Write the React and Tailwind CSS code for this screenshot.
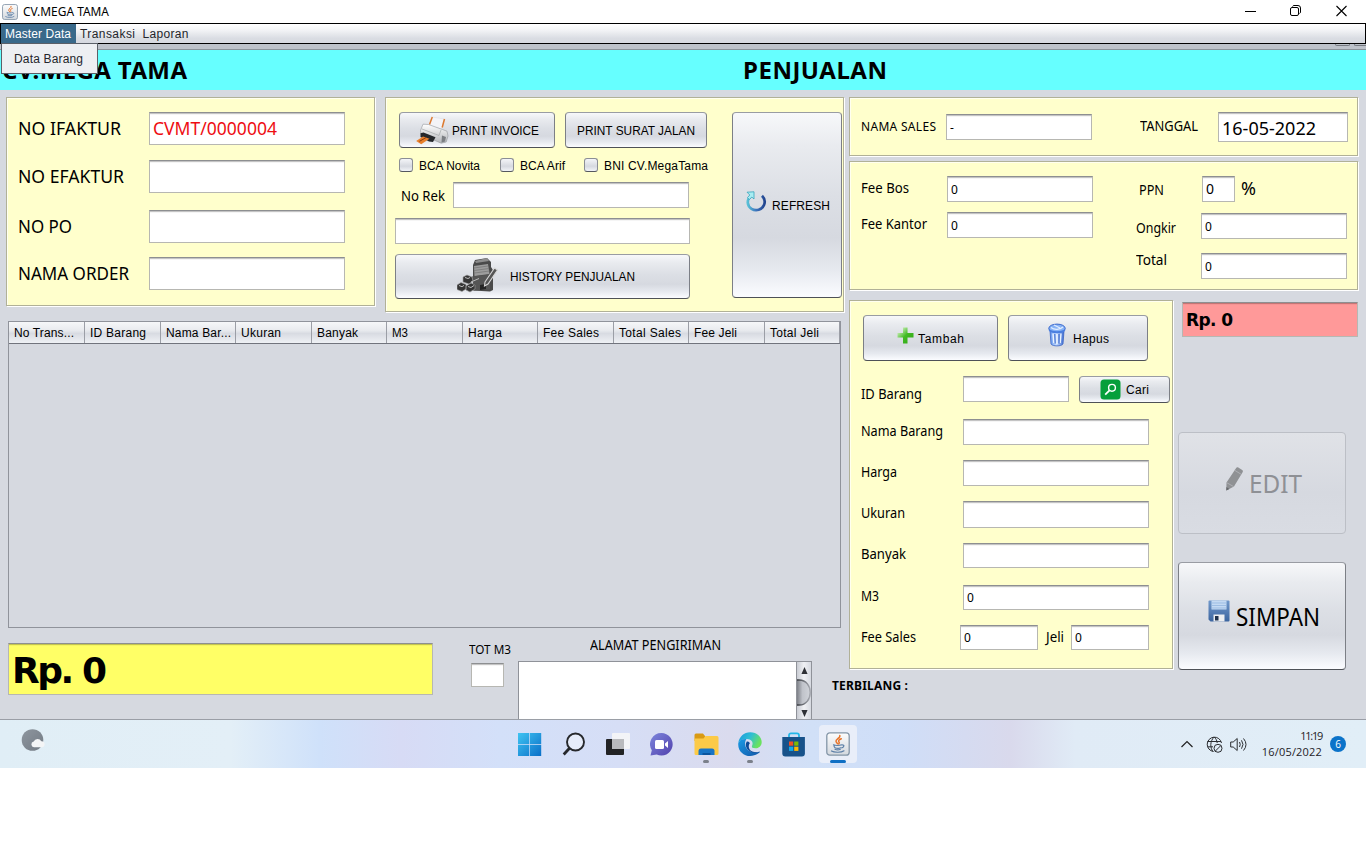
import React, { useLayoutEffect, useRef } from 'react';

const TAHOMA = "font-['Noto_Sans',sans-serif]";
const ARIAL = "font-['Liberation_Sans',sans-serif]";

/* Single line of text that fills `w` pixels: spaced out when short, condensed when long
   (or set tighter, with `tight`, so that the letters keep their width). */
function T({ w, tight, children, className = '', font = TAHOMA }) {
  const ref = useRef(null);
  useLayoutEffect(() => {
    const el = ref.current;
    if (!el || !w) return;
    el.style.letterSpacing = '0px';
    el.style.transform = 'none';
    const n = el.textContent.length;
    const natural = el.getBoundingClientRect().width;
    if (natural > w && !tight) {
      el.style.transform = `scaleX(${w / natural})`;
      el.style.marginRight = `${w - natural}px`;
    } else if (n > 1) {
      el.style.letterSpacing = `${(w - natural) / (n - 1)}px`;
    }
  }, [w, tight, children]);
  return (
    <span ref={ref} className={`block w-max flex-none origin-left whitespace-pre leading-[20px] text-black ${font} ${className}`}>
      {children}
    </span>
  );
}

function Panel({ className = '', children }) {
  return (
    <section
      className={`flex-none border border-[#b1b197] bg-[#ffffcc] shadow-[1px_1px_0_#fff,inset_1px_1px_0_#fffff0] ${className}`}
    >
      {children}
    </section>
  );
}

function Field({ className = '', children, bg = 'bg-white' }) {
  return (
    <div
      className={`flex flex-none items-center border border-[#b7b7b2] border-t-[#8d8f91] pl-[3px] shadow-[inset_0_1px_0_rgba(0,0,0,0.2),inset_0_2px_0_rgba(0,0,0,0.04)] ${bg} ${className}`}
    >
      {children}
    </div>
  );
}

function Zero() {
  return <T className="mt-[2px] text-[12px]">0</T>;
}

function Button({ className = '', children }) {
  return (
    <button
      className={`flex flex-none items-center rounded-[4px] border border-x-[#7c7f86] border-t-[#999ca3] border-b-[#4e5157] bg-[linear-gradient(#f7f8fa_0%,#e9ebef_18%,#dcdfe5_45%,#d6d9e0_68%,#e6e9ef_85%,#fbfcff_100%)] ${className}`}
    >
      {children}
    </button>
  );
}

function Check({ label, w, className }) {
  return (
    <div className={`flex items-center ${className}`}>
      <span className="mr-[6px] h-[14px] w-[14px] flex-none rounded-[3px] border border-[#8b8e95] border-b-[#55585f] bg-[linear-gradient(#f4f5f8,#d6d9e0_60%,#f2f4f8)]" />
      <T w={w} font={ARIAL} className="mt-[2px] text-[12px]">{label}</T>
    </div>
  );
}

function JavaIcon({ size }) {
  return (
    <svg width={size} height={size} viewBox="0 0 24 24" fill="none">
      <defs>
        <linearGradient id={`jv${size}`} x1="0" y1="0" x2="0" y2="1">
          <stop offset="0" stopColor="#fdfdfd" />
          <stop offset="1" stopColor="#d3d8de" />
        </linearGradient>
      </defs>
      <rect x="0.8" y="0.8" width="22.4" height="22.4" rx="3" fill={`url(#jv${size})`} stroke="#8496a8" strokeWidth="1.3" />
      <path d="M13.8 3.5c1 2.6-4.6 3.7-3.8 6 .3.9 1.2 1.5 1.7 2.3M15.3 6.8c-2.6 1-3.3 2-2.3 3.2.6.7.3 1.3-.2 1.9" stroke="#e8742a" strokeWidth="1.5" strokeLinecap="round" />
      <path d="M7.5 12.8c1.5.9 6.5.9 8 0M8 13.5c0 1.8.8 1.8 1 2.3 1.5.6 4.5.6 5.5 0M9 17.3c1.5.6 4 .6 5.3 0M16 13c2.800-.5 2.3 2.3-.3 2.9M5.5 19c2.5 1.7 10 1.7 12.500-.2" stroke="#5b7ea6" strokeWidth="1.200" strokeLinecap="round" />
    </svg>
  );
}

function PrinterIcon() {
  return (
    <svg width="34" height="30" viewBox="0 0 34 30" className="flex-none">
      <defs>
        <linearGradient id="prn" x1="0" y1="0" x2="0" y2="1">
          <stop offset="0" stopColor="#ffffff" />
          <stop offset="1" stopColor="#b3b6ba" />
        </linearGradient>
      </defs>
      <path d="M14 10.500 17 2l12 2-2.500 10z" fill="#f4f4f7" stroke="#dcdce0" strokeWidth=".5" />
      <path d="M14.500 9.500 17.300 2M27.200 12.500 29.500 4" stroke="#dd7a30" strokeWidth="1.500" fill="none" />
      <path d="M8 9.200l5.500.3 14 5 4.500 1.700 1 4.800-1.800 6-5 1.200L6 19.500l-.5-4z" fill="url(#prn)" stroke="#94979c" strokeWidth=".6" />
      <path d="M7 14 24 20.500l2-5.500" stroke="#a4a7ab" fill="none" strokeWidth=".7" />
      <path d="M5.500 18.200 8.500 17.500l12 4.800-2.500 4.700-4-.5-8.500-4.500z" fill="#25282c" />
      <path d="M27 20.500l4 1.500-1 4.500-3.500 1z" fill="#7b7e83" />
      <path d="M1.200 26 8 21.500l6.500 2.200-8.300 5.600z" fill="#e77f2c" />
      <path d="m4.500 26.300 6.500-3.700" stroke="#8a3d10" strokeWidth="1" />
    </svg>
  );
}

function HistoryIcon() {
  return (
    <svg width="41" height="36" viewBox="0 0 41 36" className="-mt-[3px] flex-none">
      <path d="m16 8 2-5 12-2 4 4v5l2 3v20l-3 1.500-17-1z" fill="#4a4a4a" />
      <path d="m18 4 12-3 2 3-13 2z" fill="#8d8d8d" />
      <path d="m17 9 14-2 1.500 10-15 2z" fill="#9c9c9c" />
      <path d="m17 11 14-2M17 13.500l15-2M17.500 16l15-2" stroke="#777" strokeWidth=".8" />
      <path d="m15 19.500 18-2v15l-16 1z" fill="#555" />
      <path d="m23 28 6-1v5l-6 1z" fill="#252525" />
      <path d="m28 25 9.500-14 3 2L31 27l-3.500 2z" fill="#555" stroke="#d7d7d7" strokeWidth="1.100" />
      <path d="m6 20 4-2 5 2 1 4-4 3-6-2zM0 28l4-2.500 5 2v4.500l-4 2.500-5-2zM9 29l5-3 4 2v4l-5 3-4-2z" fill="#353535" stroke="#a0a0a0" strokeWidth=".6" />
      <path d="m2 28.500 3 1.200 2-1.300M11 29.500l3 1 3-2M8 20.500l3 1 2-1M14 25l8-3.500" stroke="#bbb" strokeWidth="1" fill="none" />
    </svg>
  );
}

function RefreshIcon() {
  return (
    <svg width="21" height="21" viewBox="0 0 21 21" className="flex-none">
      <defs>
        <linearGradient id="rf" x1="0" y1="0" x2="1" y2="0">
          <stop offset="0" stopColor="#58bfd6" />
          <stop offset=".5" stopColor="#3d74bd" />
          <stop offset="1" stopColor="#23468f" />
        </linearGradient>
      </defs>
      <path d="M4.500 5.500C.5 9 1 15 5.500 17.800c4.500 2.700 10.500 1 12.500-3.800 1.400-3.400.3-7-2-9.300" fill="none" stroke="url(#rf)" strokeWidth="2.700" />
      <path d="M1 1.200 8 .8 8 8 5.800 6 3.300 8.600 1.500 6.500 3.800 4z" fill="#a9edf2" stroke="#38a5bd" strokeWidth=".8" />
    </svg>
  );
}

function PlusIcon() {
  return (
    <svg width="17" height="17" viewBox="0 0 17 17" className="flex-none">
      <defs>
        <linearGradient id="pl" x1="0" y1="0" x2="1" y2="1">
          <stop offset=".2" stopColor="#b5e6a0" />
          <stop offset=".5" stopColor="#43bb25" />
          <stop offset="1" stopColor="#2ca510" />
        </linearGradient>
      </defs>
      <path d="M6 .5h4.500V6h6v4.500h-6v6H6v-6H.5V6H6z" fill="url(#pl)" />
    </svg>
  );
}

function TrashIcon() {
  return (
    <svg width="18" height="24" viewBox="0 0 18 24" className="flex-none">
      <defs>
        <linearGradient id="tr" x1="0" y1="0" x2="1" y2="0">
          <stop offset="0" stopColor="#5d92ee" />
          <stop offset=".45" stopColor="#c9dfff" />
          <stop offset="1" stopColor="#3767cf" />
        </linearGradient>
      </defs>
      <path d="M2 8h14l-1 13c-1.500 2.500-10.500 2.500-12 0z" fill="url(#tr)" stroke="#3c66c4" strokeWidth=".8" />
      <path d="M5 10.500 5.800 20M9 11v10M13 10.500 12.200 20" stroke="#eaf3ff" strokeWidth="1.400" />
      <path d="M6.800 11 7.200 20.500M11 11v9.500" stroke="#3765c8" strokeWidth="1" />
      <ellipse cx="9" cy="5.300" rx="8.200" ry="4.200" fill="#86b2f6" stroke="#3f6bcc" />
      <path d="M3 4.500c3 2.500 9 2.500 12-.5M6 2l6 3" stroke="#e0edff" strokeWidth="1.200" fill="none" />
      <path d="M.8 5.500v2c2 3.500 14.400 3.500 16.400 0v-2c-2 3.700-14.400 3.700-16.400 0z" fill="#4a7fe0" />
    </svg>
  );
}

function CariIcon() {
  return (
    <svg width="21" height="21" viewBox="0 0 21 21" className="flex-none">
      <rect x=".5" y=".5" width="20" height="20" rx="3.500" fill="#069f3b" />
      <circle cx="12" cy="8.800" r="3.400" fill="none" stroke="#fff" strokeWidth="1.400" />
      <path d="m9.500 11.400-4.300 4.200" stroke="#fff" strokeWidth="1.800" />
    </svg>
  );
}

function PencilIcon() {
  return (
    <svg width="18" height="24" viewBox="0 0 18 24" className="flex-none">
      <path d="M11 1.200c.5-1 1.500-1.200 2.300-.7L17.200 3c.8.600.9 1.300.4 2.200L9 19.500 1.300 23.500l.2-8z" fill="#8f9194" />
      <path d="m9.700 3.300 6.500 4M1.700 15.700l7 3.900" stroke="#b6b8bc" strokeWidth=".8" />
      <path d="M1.300 23.500 1.400 20l3 1.900z" fill="#66686c" />
    </svg>
  );
}

function FloppyIcon() {
  return (
    <svg width="22" height="22" viewBox="0 0 22 22" className="flex-none">
      <defs>
        <linearGradient id="fl" x1="0" y1="0" x2="0" y2="1">
          <stop offset="0" stopColor="#7098cb" />
          <stop offset="1" stopColor="#3c659f" />
        </linearGradient>
      </defs>
      <path d="M.5 1.500q0-1 1-1h19q1 0 1 1v19q0 1-1 1h-18l-2-2z" fill="url(#fl)" />
      <path d="M3.500.5h15v9h-15z" fill="#c4daf3" />
      <path d="M4 3h14M4 5.500h14M4 8h14" stroke="#9dbde3" strokeWidth="1" />
      <path d="M5.500 14.500h11v7h-11z" fill="#eceef1" />
      <path d="M7 16h3.500v4.500H7z" fill="#1d2f4a" />
    </svg>
  );
}

function InvoiceRow({ label, w, gap, value }) {
  return (
    <div className={`flex h-[33px] items-center ${gap}`}>
      <div className="w-[131px] flex-none">
        <T w={w} className="-mt-[2px] text-[18px]">{label}</T>
      </div>
      <Field className="h-[33px] w-[196px]">
        {value && <T w={124} className="-mt-[2px] text-[18px] !text-[#ee0d12]">{value}</T>}
      </Field>
    </div>
  );
}

function ItemRow({ label, w, h, gap, children }) {
  return (
    <div className={`flex ${gap}`}>
      <div className={`flex w-[102px] flex-none items-center ${h}`}>
        <T w={w} className="-mt-[3px] text-[14px]">{label}</T>
      </div>
      <Field className={`w-[186px] ${h}`}>{children}</Field>
    </div>
  );
}

const columns = [
  ['No Trans...', 60, 'w-[76px]'],
  ['ID Barang', 56, 'w-[76px]'],
  ['Nama Bar...', 65, 'w-[75px]'],
  ['Ukuran', 40, 'w-[76px]'],
  ['Banyak', 41, 'w-[75px]'],
  ['M3', 16, 'w-[76px]'],
  ['Harga', 34, 'w-[75px]'],
  ['Fee Sales', 56, 'w-[76px]'],
  ['Total Sales', 62, 'w-[75px]'],
  ['Fee Jeli', 43, 'w-[76px]'],
  ['Total Jeli', 49, 'w-[75px]'],
];

function TitleBar() {
  return (
    <header className="flex h-[23px] flex-none items-center bg-white pl-[2px]">
      <JavaIcon size={16} />
      <T w={86} className="ml-[5px] text-[12px]">CV.MEGA TAMA</T>
      <div className="ml-auto mr-[19px] flex items-center text-black">
        <svg className="mr-[34px]" width="11" height="12" viewBox="0 0 11 12"><path d="M0 5.500h11" stroke="currentColor" /></svg>
        <svg className="-mt-[2px] mr-[35px]" width="11" height="12" viewBox="0 0 11 12" fill="none" stroke="currentColor">
          <rect x=".5" y="2.500" width="8" height="8" rx="1.500" />
          <path d="M2.500 1.500Q3 .5 4 .5h4q2.500 0 2.500 2.500v4q0 1-1 1.500" />
        </svg>
        <svg className="-mt-[2px]" width="11" height="12" viewBox="0 0 11 12"><path d="m.5 1 10 10m0-10-10 10" stroke="currentColor" strokeWidth="1.100" /></svg>
      </div>
    </header>
  );
}

function MenuBar() {
  return (
    <nav className="relative z-10 flex h-[21px] flex-none border border-black bg-[linear-gradient(#fff,#f4f5f7_30%,#dadde3_75%,#d6d9e0)]">
      <div className="flex w-[75px] items-center bg-[#39698a] pl-[4px]">
        <T w={66} font={ARIAL} className="text-[12px] !text-white">Master Data</T>
      </div>
      <div className="flex items-center pl-[4px]">
        <T w={55} font={ARIAL} className="text-[12px] !text-[#24262b]">Transaksi</T>
      </div>
      <div className="flex items-center pl-[7px]">
        <T w={46} font={ARIAL} className="text-[12px] !text-[#24262b]">Laporan</T>
      </div>
      <div className="absolute left-0 top-[19px] flex h-[31px] w-[97px] items-center border border-[#5b6068] bg-[#edeff2] pl-[12px]">
        <T w={69} font={ARIAL} className="text-[12px] !text-[#24262b]">Data Barang</T>
      </div>
    </nav>
  );
}

function InvoicePanel() {
  return (
    <Panel className="h-[209px] w-[369px] pl-[11px] pt-[14px]">
      <InvoiceRow label="NO IFAKTUR" w={103} gap="" value="CVMT/0000004" />
      <InvoiceRow label="NO EFAKTUR" w={106} gap="mt-[15px]" />
      <InvoiceRow label="NO PO" w={54} gap="mt-[17px]" />
      <InvoiceRow label="NAMA ORDER" w={111} gap="mt-[14px]" />
    </Panel>
  );
}

function PrintPanel() {
  return (
    <Panel className="flex h-[215px] w-[459px] pl-[9px] pt-[14px]">
      <div className="w-[337px] flex-none">
        <div className="flex gap-[10px] pl-[4px]">
          <Button className="h-[36px] w-[156px] pl-[15px]">
            <PrinterIcon />
            <T w={87} font={ARIAL} className="ml-[3px] mt-[2px] text-[12px]">PRINT INVOICE</T>
          </Button>
          <Button className="h-[36px] w-[142px] justify-center">
            <T w={118} font={ARIAL} className="mt-[2px] text-[12px]">PRINT SURAT JALAN</T>
          </Button>
        </div>
        <div className="mt-[10px] flex h-[14px] pl-[4px]">
          <Check label="BCA Novita" w={61} className="w-[101px]" />
          <Check label="BCA Arif" w={45} className="w-[84px]" />
          <Check label="BNI CV.MegaTama" w={104} className="" />
        </div>
        <div className="mt-[10px] flex items-center pl-[6px]">
          <div className="w-[52px] pt-[2px]"><T w={44} className="text-[14px]">No Rek</T></div>
          <Field className="h-[26px] w-[236px]" />
        </div>
        <Field className="mt-[10px] h-[26px] w-[295px]" />
        <Button className="mt-[10px] h-[45px] w-[295px] pl-[61px]">
          <HistoryIcon />
          <T w={125} font={ARIAL} className="ml-[12px] text-[12px]">HISTORY PENJUALAN</T>
        </Button>
      </div>
      <Button className="h-[186px] w-[110px] pl-[13px]">
        <span className="-mt-[7px]"><RefreshIcon /></span>
        <T w={58} font={ARIAL} className="ml-[5px] mt-[2px] text-[12px]">REFRESH</T>
      </Button>
    </Panel>
  );
}

function SalesPanel() {
  return (
    <Panel className="flex h-[59px] w-[509px] pl-[11px] pt-[14px]">
      <div className="w-[85px] pt-[5px]"><T w={75} className="text-[12px]">NAMA SALES</T></div>
      <Field className="mt-[2px] h-[26px] w-[146px]"><T className="mt-[2px] text-[12px]">-</T></Field>
      <div className="ml-[48px] w-[78px] pt-[4px]"><T w={58} className="text-[14px]">TANGGAL</T></div>
      <Field className="h-[30px] w-[130px]"><T w={94} tight className="mt-[2px] text-[18px]">16-05-2022</T></Field>
    </Panel>
  );
}

function FeePanel() {
  return (
    <Panel className="mt-[5px] flex h-[129px] w-[509px] pl-[11px] pt-[14px]">
      <div className="w-[232px]">
        <div className="flex items-center">
          <div className="w-[86px]"><T w={48} className="-mt-[2px] text-[14px]">Fee Bos</T></div>
          <Field className="h-[26px] w-[146px]"><Zero /></Field>
        </div>
        <div className="mt-[10px] flex items-center">
          <div className="w-[86px]"><T w={66} className="-mt-[2px] text-[14px]">Fee Kantor</T></div>
          <Field className="h-[26px] w-[146px]"><Zero /></Field>
        </div>
      </div>
      <div className="ml-[43px] w-[220px]">
        <div className="flex h-[26px] items-center">
          <div className="w-[66px] pl-[3px] pt-[2px]"><T w={25} className="text-[14px]">PPN</T></div>
          <Field className="h-[26px] w-[33px]"><T className="text-[14px]">0</T></Field>
          <T w={17} className="-mt-[3px] ml-[6px] text-[18px]">%</T>
        </div>
        <div className="mt-[11px] flex items-center">
          <div className="w-[65px] pt-[3px]"><T w={40} className="text-[14px]">Ongkir</T></div>
          <Field className="h-[26px] w-[146px]"><Zero /></Field>
        </div>
        <div className="mt-[14px] flex">
          <div className="w-[65px]"><T w={31} className="-mt-[3px] text-[14px]">Total</T></div>
          <Field className="h-[26px] w-[146px]"><Zero /></Field>
        </div>
      </div>
    </Panel>
  );
}

function ItemPanel() {
  return (
    <Panel className="h-[369px] w-[324px] pl-[11px] pt-[14px]">
      <div className="flex gap-[10px] pl-[2px]">
        <Button className="h-[46px] w-[135px] pl-[33px]">
          <span className="-mt-[6px]"><PlusIcon /></span>
          <T w={46} font={ARIAL} className="ml-[4px] mt-[2px] text-[12px]">Tambah</T>
        </Button>
        <Button className="h-[46px] w-[140px] pl-[39px]">
          <span className="-mt-[7px]"><TrashIcon /></span>
          <T w={36} font={ARIAL} className="ml-[7px] mt-[2px] text-[12px]">Hapus</T>
        </Button>
      </div>
      <div className="mt-[15px] flex h-[27px]">
        <div className="w-[102px] pt-[8px]"><T w={61} className="text-[14px]">ID Barang</T></div>
        <Field className="h-[26px] w-[106px]" />
        <Button className="ml-[10px] h-[27px] w-[91px] pl-[20px]">
          <CariIcon />
          <T w={23} font={ARIAL} className="ml-[5px] text-[12px]">Cari</T>
        </Button>
      </div>
      <ItemRow label="Nama Barang" w={82} h="h-[26px]" gap="mt-[16px]" />
      <ItemRow label="Harga" w={36} h="h-[26px]" gap="mt-[15px]" />
      <ItemRow label="Ukuran" w={44} h="h-[27px]" gap="mt-[15px]" />
      <ItemRow label="Banyak" w={45} h="h-[25px]" gap="mt-[15px]" />
      <ItemRow label="M3" w={18} h="h-[25px]" gap="mt-[17px]"><T className="mt-px text-[12px]">0</T></ItemRow>
      <div className="mt-[15px] flex h-[25px] items-center">
        <div className="w-[99px]"><T w={55} className="-mt-px text-[14px]">Fee Sales</T></div>
        <Field className="h-[25px] w-[78px]"><T className="text-[12px]">0</T></Field>
        <div className="w-[33px] pl-[8px]"><T w={18} className="-mt-px text-[14px]">Jeli</T></div>
        <Field className="h-[25px] w-[78px]"><T className="text-[12px]">0</T></Field>
      </div>
    </Panel>
  );
}

function ItemsTable() {
  return (
    <div className="ml-[2px] mt-[9px] h-[307px] w-[833px] border border-[#90939b]">
      <div className="flex h-[22px] w-[831px] border-b border-[#71747d] bg-[linear-gradient(#f6f7f9,#e8eaee_40%,#d8dbe2_55%,#eff1f5)]">
        {columns.map(([name, w, cw]) => (
          <div key={name} className={`flex flex-none items-center overflow-hidden border-r border-[#9b9ea6] pl-[5px] ${cw}`}>
            <T w={w} font={ARIAL} className="text-[12px]">{name}</T>
          </div>
        ))}
      </div>
    </div>
  );
}

function Footer() {
  return (
    <div className="ml-[2px] mt-[15px] flex h-[76px]">
      <Field bg="bg-[#ffff66]" className="h-[52px] w-[425px]">
        <T w={95} tight font="font-['DejaVu_Sans',sans-serif]" className="mt-[3px] text-[36px] font-bold">Rp. 0</T>
      </Field>
      <div className="ml-[36px] flex w-[49px] flex-none flex-col">
        <T w={42} className="-mt-[3px] text-[12px]">TOT M3</T>
        <Field className="ml-[2px] mt-[3px] h-[24px] w-[33px]" />
      </div>
      <div className="flex w-[294px] flex-none flex-col">
        <div className="flex h-[18px] items-start pl-[72px]"><T w={131} className="-mt-[8px] text-[14px]">ALAMAT PENGIRIMAN</T></div>
        <div className="flex h-[58px] border border-b-0 border-[#8f9299] bg-white">
          <div className="flex-1" />
          <div className="flex w-[15px] flex-col items-center justify-between overflow-hidden border-l border-[#8f9299] bg-[linear-gradient(90deg,#c9ccd3,#f0f1f4_50%,#d6d9e0)] pb-[2px] pt-[5px]">
            <svg width="7" height="7" viewBox="0 0 7 8"><path d="m3.500 0 3.500 8H0z" fill="#2f3136" /></svg>
            <svg width="14" height="27" viewBox="0 0 14 27">
              <defs>
                <linearGradient id="thumb"><stop stopColor="#7d8087" /><stop offset=".4" stopColor="#c0c3ca" /><stop offset="1" stopColor="#d2d5db" /></linearGradient>
                <linearGradient id="rim"><stop stopColor="#35383d" /><stop offset=".6" stopColor="#7b7e85" /><stop offset="1" stopColor="#a8abb2" /></linearGradient>
              </defs>
              <path d="M0 .8h2c15.500 0 15.500 25.400 0 25.400H0z" fill="url(#thumb)" />
              <path d="M0 1h2c15 0 15 25 0 25H0" fill="none" stroke="url(#rim)" strokeWidth="1.500" />
            </svg>
            <svg width="7" height="7" viewBox="0 0 7 8"><path d="m3.500 8 3.500-8H0z" fill="#2f3136" /></svg>
          </div>
        </div>
      </div>
      <T w={76} className="ml-[20px] mt-[33px] text-[12px] font-bold">TERBILANG :</T>
    </div>
  );
}

function Actions() {
  return (
    <div className="ml-[5px] flex flex-col">
      <Field bg="bg-[#ff9999]" className="ml-[4px] mt-[2px] h-[35px] w-[176px]">
        <T w={47} tight font="font-['DejaVu_Sans',sans-serif]" className="text-[17px] font-bold">Rp. 0</T>
      </Field>
      <div className="mt-[95px] flex h-[102px] w-[168px] items-center rounded-[4px] border border-[#bcbfc6] bg-[linear-gradient(#e0e2e7,#d6d9e0_60%,#d9dce3)] pl-[46px]">
        <span className="-mt-[9px]"><PencilIcon /></span>
        <T w={53} className="ml-[6px] text-[25px] !text-[#8e9095]">EDIT</T>
      </div>
      <Button className="mt-[28px] h-[108px] w-[168px] pl-[29px]">
        <span className="-mt-[10px]"><FloppyIcon /></span>
        <T w={84} className="ml-[6px] text-[25px]">SIMPAN</T>
      </Button>
    </div>
  );
}

function TaskCell({ children, dot }) {
  return (
    <div className="flex h-[48px] w-[44px] flex-none flex-col items-center pt-[12px]">
      {children}
      {dot && <span className="mt-[4px] h-[3px] w-[6px] rounded-full bg-[#7b808a]" />}
    </div>
  );
}

function Taskbar() {
  return (
    <footer className="flex h-[48px] flex-none bg-[linear-gradient(90deg,#e0eef6_0px,#e3eff7_230px,#cfe1fa_320px,#d7dbf5_400px,#d3e0f9_500px,#d6def6_620px,#dadbee_730px,#d1e0f7_810px,#cfdef8_900px,#d9d9ec_1010px,#e0ebf6_1075px,#e1eef7_1366px)]">
      <div className="w-[508px] flex-none pl-[21px] pt-[9px]">
        <svg width="24" height="24" viewBox="0 0 24 24">
          <defs><linearGradient id="moon" x1="0" y1="0" x2="1" y2="1"><stop stopColor="#8e969f" /><stop offset="1" stopColor="#737b84" /></linearGradient></defs>
          <circle cx="11.500" cy="11" r="10.800" fill="url(#moon)" />
          <path d="M13 18.300a3 3 0 0 1-.3-5.900 4.200 4.200 0 0 1 7.600-.2 3 3 0 0 1 .5 6.100z" fill="#f4f5f6" />
        </svg>
      </div>
      <TaskCell>
        <svg width="24" height="24" viewBox="0 0 24 24">
          <defs><linearGradient id="win" x1="0" y1="0" x2="1" y2="1"><stop stopColor="#3fc4f2" /><stop offset="1" stopColor="#0a6fc8" /></linearGradient></defs>
          <path d="M0 1h11.300v11H0zM12 1h11.200v11H12zM0 12.800h11.300V24H0zM12 12.800h11.200V24H12z" fill="url(#win)" />
        </svg>
      </TaskCell>
      <TaskCell>
        <svg width="24" height="24" viewBox="0 0 24 24" fill="none" stroke="#26282c">
          <circle cx="13.500" cy="10" r="8.500" strokeWidth="1.900" fill="#e6ecfa" />
          <path d="m7.700 16-6 6.500" strokeWidth="2.800" />
        </svg>
      </TaskCell>
      <TaskCell>
        <svg width="24" height="24" viewBox="0 0 24 24">
          <rect x="0" y="7" width="18" height="16" rx="1" fill="#222325" />
          <rect x="6" y="1" width="18" height="16" rx="1" fill="#f3f4f7" />
          <path d="M6 7h12v10H6z" fill="#b9babd" />
        </svg>
      </TaskCell>
      <TaskCell>
        <svg width="24" height="24" viewBox="0 0 24 24">
          <defs><linearGradient id="chat" x1="0" y1="0" x2="1" y2="1"><stop stopColor="#7d86dc" /><stop offset="1" stopColor="#5141ad" /></linearGradient></defs>
          <path d="M11.500 1a11.300 11.300 0 1 1-4.800 21.600L.5 23.500l1.300-5.200A11.300 11.300 0 0 1 11.500 1z" fill="url(#chat)" />
          <rect x="5" y="8" width="9" height="9" rx="1.500" fill="#fff" />
          <path d="m15 11.500 3-2.500v7l-3-2.500z" fill="#fff" />
        </svg>
      </TaskCell>
      <TaskCell dot>
        <svg width="25" height="24" viewBox="0 0 25 24">
          <path d="M.5 3q0-1.500 1.500-1.500h7l2 2.500v5H.5z" fill="#d99a14" />
          <path d="M.5 6.500h9L11.500 4H23q1.500 0 1.500 1.500v16q0 1.500-1.500 1.500H2q-1.500 0-1.500-1.500z" fill="#fcca47" />
          <path d="M4.500 23v-4q0-2.500 2.500-2.500h11q2.500 0 2.500 2.500v4z" fill="#1874c5" />
          <path d="M8.500 23v-2h8v2z" fill="#0b559e" />
        </svg>
      </TaskCell>
      <TaskCell dot>
        <svg width="24" height="24" viewBox="0 0 24 24">
          <defs>
            <linearGradient id="edA" x1="0" y1="0" x2="1" y2=".4"><stop stopColor="#1897e0" /><stop offset=".55" stopColor="#30bfd2" /><stop offset="1" stopColor="#6ae25f" /></linearGradient>
            <linearGradient id="edB" x1="0" y1="0" x2="1" y2="1"><stop stopColor="#1b9be5" /><stop offset="1" stopColor="#1156a8" /></linearGradient>
          </defs>
          <path d="M.3 11C1 4.800 6 .2 12.200.2c6.800 0 11.500 5 11.500 9.800 0 4-3 6.300-6.200 6.300-2.800 0-4.200-1-3.500-2.300 2-4-1-7-5-7C4.500 7 1.500 8.500.3 11z" fill="url(#edA)" />
          <path d="M.3 11C1.300 8.500 4 6.800 8.500 7 5.800 10 6 21 18.500 20.200c2 0 3.300-.8 3.500-.4.2.5-3.800 4.200-9.800 4.200C5.300 24-.5 18.500.3 11z" fill="url(#edB)" />
          <path d="M8.800 9.500c-3 4.500 1 11.500 9 11.200 2 0 3.800-1 4.300-1.200-5.800 2.300-12-.8-11.300-5.700.2-2 1.200-2.500 1.200-2.500S11 9 8.800 9.500z" fill="#0d4b98" />
        </svg>
      </TaskCell>
      <TaskCell>
        <svg width="24" height="25" viewBox="0 0 24 25">
          <path d="M7 6V3.300Q7 1.300 9 1.300h6q2 0 2 2V6" fill="none" stroke="#23b7e9" strokeWidth="1.800" />
          <path d="M.3 5v16.500q0 3 3 3h16.600q3 0 3-3V5z" fill="#17528a" />
          <path d="M7 9.500h4.200v4.200H7z" fill="#f25022" /><path d="M12.200 9.500h4.200v4.200h-4.200z" fill="#7fba00" />
          <path d="M7 14.700h4.200v4.200H7z" fill="#15a9e8" /><path d="M12.200 14.700h4.200v4.200h-4.200z" fill="#ffb900" />
        </svg>
      </TaskCell>
      <div className="ml-[3px] mt-[5px] flex h-[38px] w-[38px] flex-none flex-col items-center rounded-[4px] bg-[#e9eef9] pt-[7px]">
        <JavaIcon size={24} />
        <span className="mt-[4px] h-[3px] w-[16px] flex-none rounded-full bg-[#0f6fc4]" />
      </div>
      <div className="ml-auto flex h-[48px] items-center pr-[20px]">
        <svg width="12" height="8" viewBox="0 0 12 8" fill="none" stroke="#222"><path d="m.5 7 5.500-5.500L11.500 7" strokeWidth="1.200" /></svg>
        <svg className="ml-[13px]" width="17" height="17" viewBox="0 0 17 17" fill="none" stroke="#2b2d31">
          <path d="M15.500 7A7.200 7.200 0 1 0 7.500 15.500M8.200 1C3.800 5 4 12 7 15.500M8.200 1c1.800 1.500 2.700 3.500 3 6M1.500 5.500h13.500M1.500 10.800h5.500" />
          <circle cx="12" cy="12.300" r="4" /><path d="m9.300 15.100 5.500-5.500" />
        </svg>
        <svg className="ml-[7px]" width="17" height="15" viewBox="0 0 17 15" fill="none" stroke="#2b2d31">
          <path d="M.7 5v5h2.500l4 3.500v-12L3.200 5zM9.500 5q1.500 2.500 0 5M11.500 3.300q3 4.200 0 8.400M13.500 1.500q5 6 0 12" />
        </svg>
        <div className="ml-[15px] flex w-[60px] flex-col items-end">
          <T w={23} tight font="font-['Open_Sans',sans-serif]" className="!leading-[16px] text-[11px] !text-[#1e2126]">11:19</T>
          <T w={60} tight font="font-['Open_Sans',sans-serif]" className="!leading-[16px] text-[11px] !text-[#1e2126]">16/05/2022</T>
        </div>
        <span className="ml-[8px] flex h-[16px] w-[16px] items-center justify-center rounded-full bg-[#0b73c9]">
          <T font="font-['Open_Sans',sans-serif]" className="text-[10px] !text-white">6</T>
        </span>
      </div>
    </footer>
  );
}

export default function App() {
  return (
    <div className="flex h-[850px] w-[1366px] flex-col overflow-hidden bg-white">
      <TitleBar />
      <MenuBar />
      <div className="flex h-[6px] flex-none justify-end gap-[4px] border-b border-[#8b9299] bg-[#bdc2ca]">
        <span className="h-[2px] w-[15px] rounded-b-[3px] border border-t-0 border-[#777b82]" />
        <span className="h-[2px] w-[12px] rounded-bl-[3px] border border-r-0 border-t-0 border-[#777b82]" />
      </div>
      <div className="flex h-[40px] flex-none items-center bg-[#66ffff] pl-[2px]">
        <div className="w-[741px]"><T w={185} className="text-[24px] font-bold">CV.MEGA TAMA</T></div>
        <T w={144} className="text-[24px] font-bold">PENJUALAN</T>
      </div>
      <main className="flex h-[630px] flex-none border-b border-[#9a9ea6] bg-[#d6d9e0] pt-[7px]">
        <div className="w-[849px] flex-none pl-[6px]">
          <div className="flex items-start gap-[10px]">
            <InvoicePanel />
            <PrintPanel />
          </div>
          <ItemsTable />
          <Footer />
        </div>
        <div className="flex-none">
          <SalesPanel />
          <FeePanel />
          <div className="mt-[10px] flex items-start">
            <ItemPanel />
            <Actions />
          </div>
        </div>
      </main>
      <Taskbar />
    </div>
  );
}
